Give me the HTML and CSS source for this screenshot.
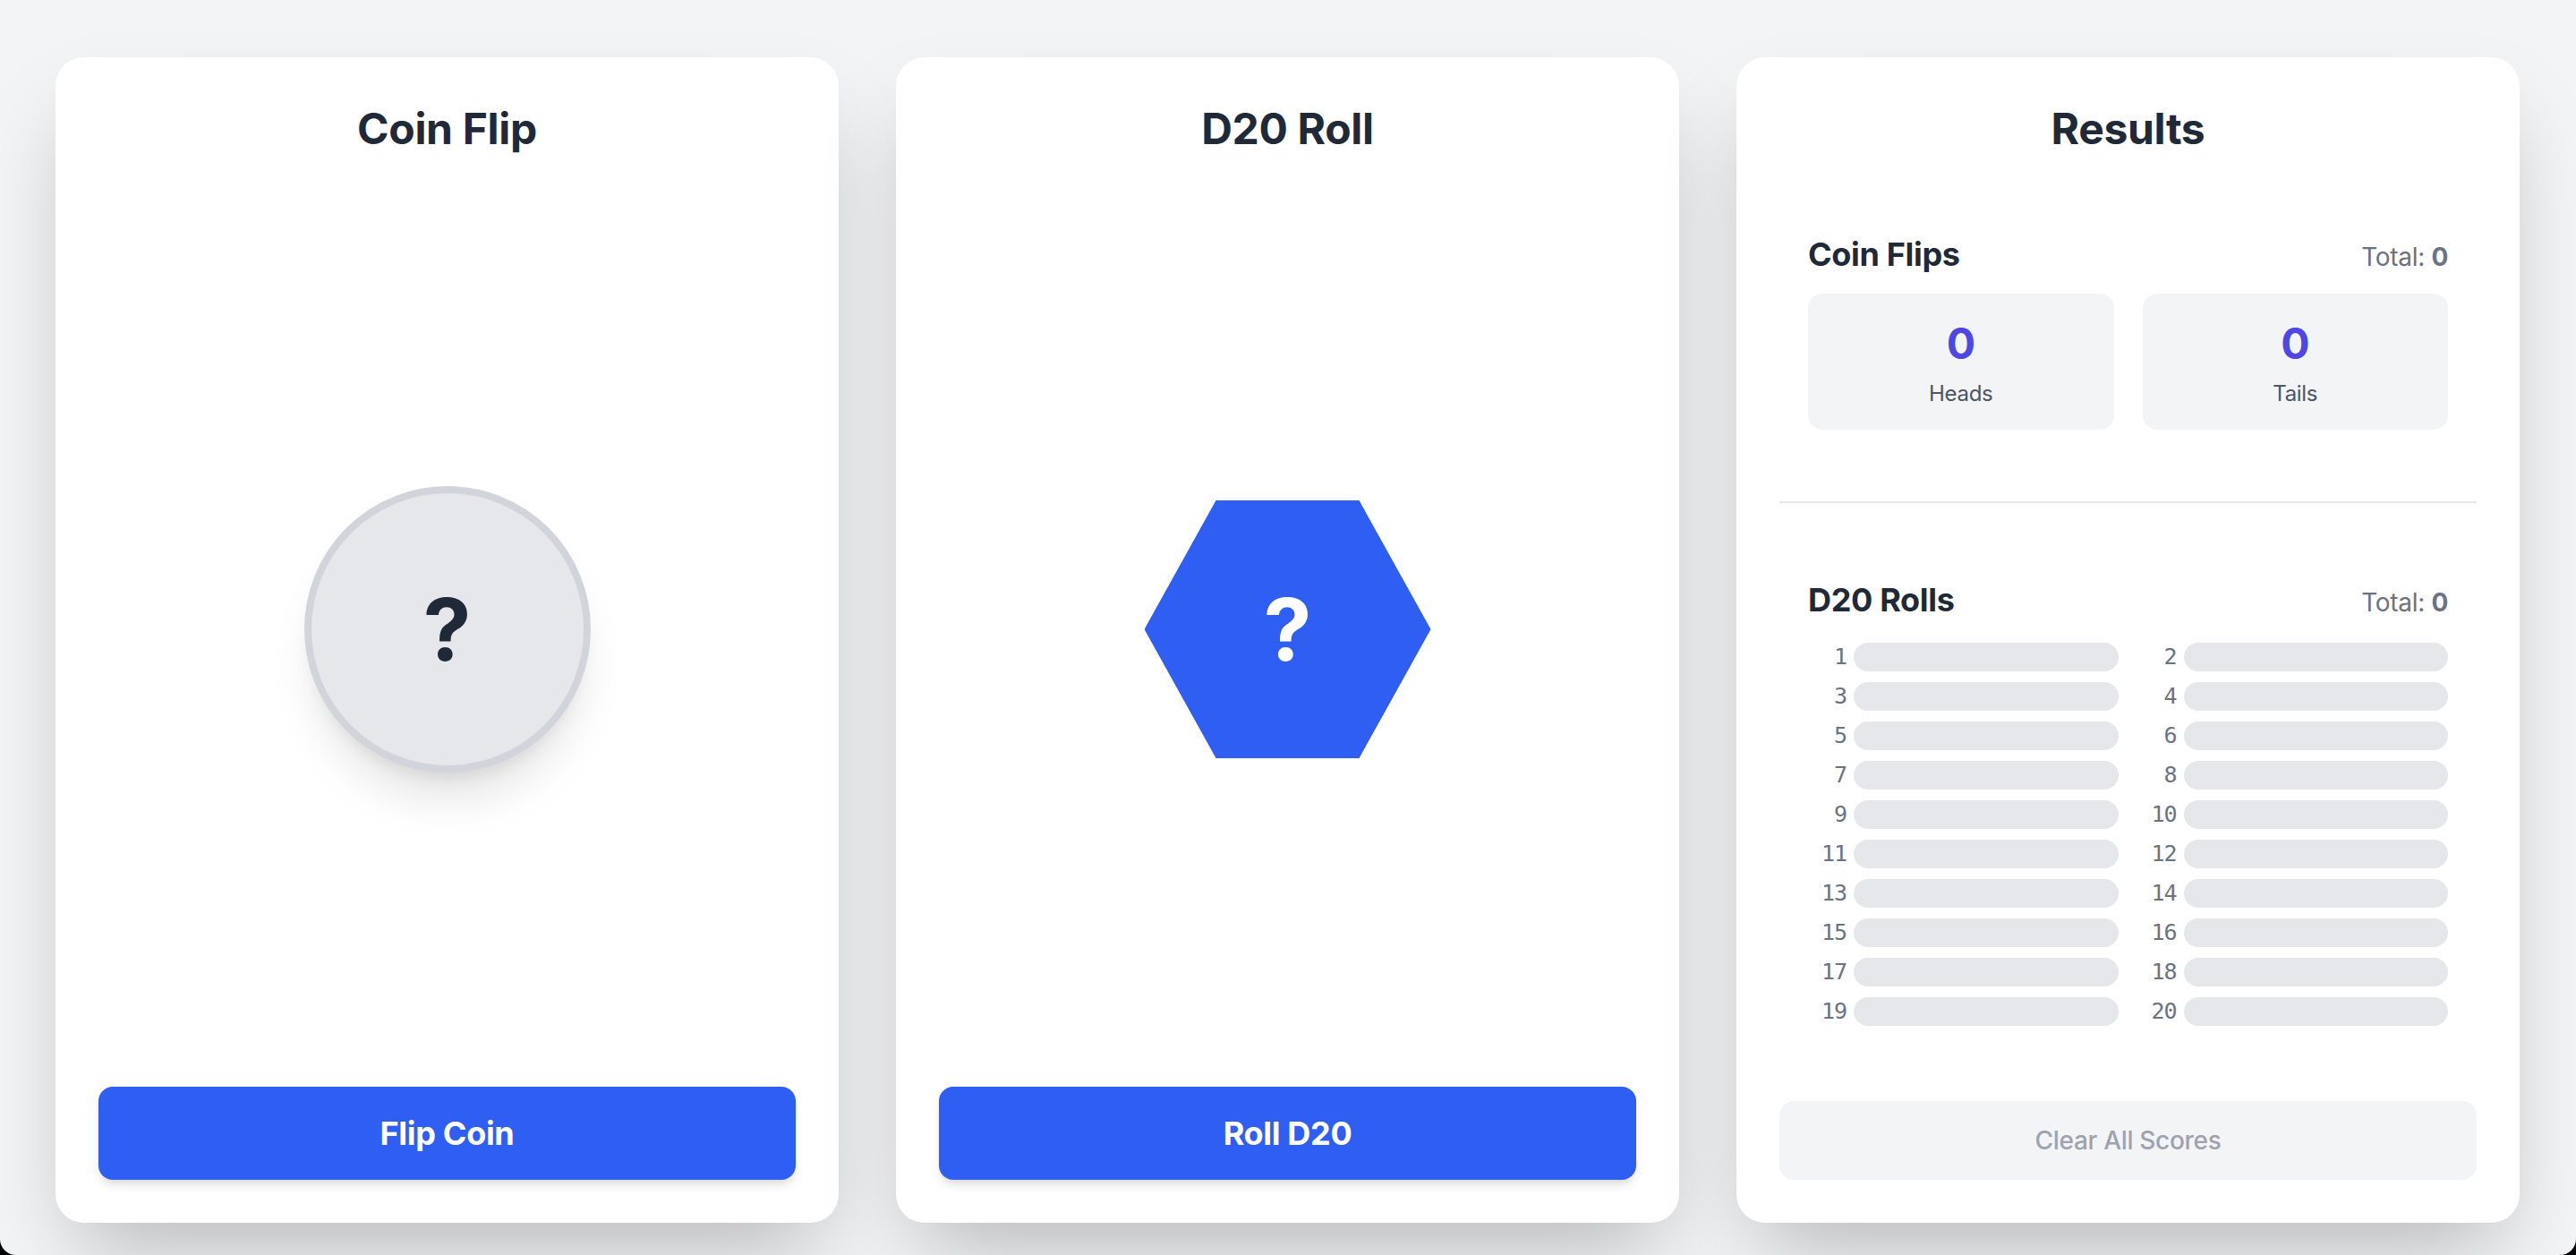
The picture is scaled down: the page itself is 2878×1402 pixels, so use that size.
FILE: index.html
```html
<!DOCTYPE html>
<html lang="en">
<head>
<meta charset="utf-8">
<title>Coin Flip &amp; D20</title>
<link rel="stylesheet" href="styles.css">
</head>
<body>
<main class="grid">
  <section class="card">
    <h2 class="card-title tight">Coin Flip</h2>
    <div class="stage">
      <div class="coin"><span class="q q-dark">?</span></div>
    </div>
    <button class="btn-primary">Flip Coin</button>
  </section>

  <section class="card">
    <h2 class="card-title tight">D20 Roll</h2>
    <div class="stage">
      <div class="hex"><span class="q q-light">?</span></div>
    </div>
    <button class="btn-primary">Roll D20</button>
  </section>

  <section class="card">
    <h2 class="card-title wide">Results</h2>

    <div class="block">
      <div class="block-head">
        <h3 class="block-title">Coin Flips</h3>
        <div class="total">Total: <b>0</b></div>
      </div>
      <div class="stats">
        <div class="stat"><div class="stat-num">0</div><div class="stat-label">Heads</div></div>
        <div class="stat"><div class="stat-num">0</div><div class="stat-label">Tails</div></div>
      </div>
    </div>

    <div class="divider"></div>

    <div class="block">
      <div class="block-head rolls-head">
        <h3 class="block-title">D20 Rolls</h3>
        <div class="total">Total: <b>0</b></div>
      </div>
      <div class="rolls">
        <div class="roll"><span class="roll-n">1</span><span class="bar"></span></div>
        <div class="roll"><span class="roll-n">2</span><span class="bar"></span></div>
        <div class="roll"><span class="roll-n">3</span><span class="bar"></span></div>
        <div class="roll"><span class="roll-n">4</span><span class="bar"></span></div>
        <div class="roll"><span class="roll-n">5</span><span class="bar"></span></div>
        <div class="roll"><span class="roll-n">6</span><span class="bar"></span></div>
        <div class="roll"><span class="roll-n">7</span><span class="bar"></span></div>
        <div class="roll"><span class="roll-n">8</span><span class="bar"></span></div>
        <div class="roll"><span class="roll-n">9</span><span class="bar"></span></div>
        <div class="roll"><span class="roll-n">10</span><span class="bar"></span></div>
        <div class="roll"><span class="roll-n">11</span><span class="bar"></span></div>
        <div class="roll"><span class="roll-n">12</span><span class="bar"></span></div>
        <div class="roll"><span class="roll-n">13</span><span class="bar"></span></div>
        <div class="roll"><span class="roll-n">14</span><span class="bar"></span></div>
        <div class="roll"><span class="roll-n">15</span><span class="bar"></span></div>
        <div class="roll"><span class="roll-n">16</span><span class="bar"></span></div>
        <div class="roll"><span class="roll-n">17</span><span class="bar"></span></div>
        <div class="roll"><span class="roll-n">18</span><span class="bar"></span></div>
        <div class="roll"><span class="roll-n">19</span><span class="bar"></span></div>
        <div class="roll"><span class="roll-n">20</span><span class="bar"></span></div>
      </div>
    </div>

    <button class="btn-clear">Clear All Scores</button>
  </section>
</main>
</body>
</html>
```

FILE: styles.css
```css
* { box-sizing: border-box; }

html, body {
  margin: 0;
  padding: 0;
}

body {
  background: #f3f4f6;
  font-family: Inter, "Noto Sans", "Liberation Sans", sans-serif;
  color: #1f2937;
  letter-spacing: -0.02em;
  min-height: 1402px;
}

body::after {
  content: "";
  position: fixed;
  inset: 0;
  pointer-events: none;
  border-bottom-left-radius: 18px;
  border-bottom-right-radius: 18px;
  box-shadow: 0 0 0 40px #000;
}

.grid {
  display: grid;
  grid-template-columns: repeat(3, 1fr);
  column-gap: 64px;
  padding: 64px 63px 0 62px;
  align-items: stretch;
}

.card {
  background: #fff;
  border-radius: 32px;
  padding: 48px;
  display: flex;
  flex-direction: column;
  box-shadow: 0 50px 100px -24px rgba(0, 0, 0, 0.25);
}

.card-title {
  margin: 0;
  font-size: 48px;
  line-height: 64px;
  font-weight: 700;
  text-align: center;
  color: #1f2937;
}
.card-title.tight { margin-bottom: 16px; }
.card-title.wide { margin-bottom: 48px; }

.stage {
  flex: 1;
  display: flex;
  align-items: center;
  justify-content: center;
}

.coin {
  width: 320px;
  height: 320px;
  border-radius: 50%;
  background: #e5e7eb;
  border: 8px solid #d1d5db;
  display: flex;
  align-items: center;
  justify-content: center;
  box-shadow: 0 40px 50px -10px rgba(0, 0, 0, 0.1), 0 16px 20px -12px rgba(0, 0, 0, 0.1);
}

.hex {
  width: 320px;
  height: 288px;
  background: #2f5ff2;
  clip-path: polygon(25% 0, 75% 0, 100% 50%, 75% 100%, 25% 100%, 0 50%);
  display: flex;
  align-items: center;
  justify-content: center;
}

.q {
  font-size: 96px;
  line-height: 1;
  font-weight: 700;
  letter-spacing: 0;
}
.q-dark { color: #1f2937; }
.q-light { color: #fff; }

.btn-primary {
  display: block;
  width: 100%;
  border: 0;
  border-radius: 16px;
  background: #2f5ff2;
  color: #fff;
  font-family: inherit;
  letter-spacing: inherit;
  font-size: 36px;
  line-height: 56px;
  font-weight: 700;
  padding: 24px;
  box-shadow: 0 8px 12px -2px rgba(0, 0, 0, 0.1), 0 4px 8px -4px rgba(0, 0, 0, 0.1);
}

.block {
  padding: 32px;
}

.block-head {
  display: flex;
  justify-content: space-between;
  align-items: baseline;
  margin-bottom: 16px;
}

.block-title {
  margin: 0;
  font-size: 36px;
  line-height: 56px;
  font-weight: 700;
  color: #1f2937;
}

.total {
  font-size: 28px;
  line-height: 40px;
  color: #6b7280;
}
.total b { font-weight: 700; color: #6b7280; }

.stats {
  display: grid;
  grid-template-columns: 1fr 1fr;
  column-gap: 32px;
}

.stat {
  background: #f3f4f6;
  border-radius: 16px;
  padding: 24px;
  text-align: center;
}

.stat-num {
  font-size: 48px;
  line-height: 64px;
  font-weight: 700;
  color: #4f46e5;
}

.stat-label {
  margin-top: 8px;
  font-size: 24px;
  line-height: 32px;
  color: #4b5563;
}

.divider {
  height: 2px;
  background: #e5e7eb;
  margin: 48px 0;
}

.rolls {
  display: grid;
  grid-template-columns: 1fr 1fr;
  column-gap: 22px;
  row-gap: 4px;
}

.roll {
  display: flex;
  align-items: center;
  height: 40px;
}

.roll-n {
  width: 43px;
  margin-right: 8px;
  text-align: right;
  font-family: "DejaVu Sans Mono", "Liberation Mono", monospace;
  font-size: 25px;
  letter-spacing: -0.04em;
  line-height: 32px;
  color: #6b7280;
}

.bar {
  flex: 1;
  height: 32px;
  border-radius: 9999px;
  background: #e5e7eb;
}

.btn-clear {
  display: block;
  width: 100%;
  margin-top: 48px;
  border: 0;
  border-radius: 16px;
  background: #f3f4f6;
  color: #9ca3af;
  font-family: inherit;
  letter-spacing: inherit;
  font-size: 28px;
  line-height: 40px;
  font-weight: 500;
  padding: 24px;
}
```
